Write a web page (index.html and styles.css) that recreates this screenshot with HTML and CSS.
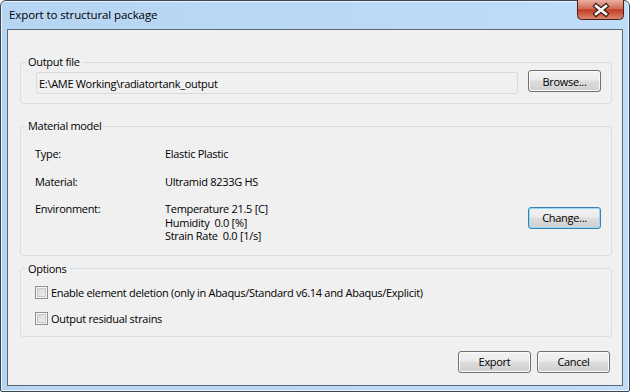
FILE: index.html
```html
<!DOCTYPE html>
<html lang="en">

<head>
  <meta charset="UTF-8">
  <title>Export to structural package</title>
  <link rel="stylesheet" href="styles.css">
</head>

<body>
  <div class="window">
    <div class="titlebar">
      <span class="title">Export to structural package</span>
      <div class="close-btn">
        <svg width="47" height="20" viewBox="0 0 47 20">
          <defs>
            <linearGradient id="close-grad" x1="0" y1="0" x2="0" y2="1">
              <stop offset="0" stop-color="#e9b0a4" />
              <stop offset="0.45" stop-color="#d46a55" />
              <stop offset="0.5" stop-color="#c23b22" />
              <stop offset="1" stop-color="#d98a73" />
            </linearGradient>
          </defs>
          <path d="M0.5 0 V15.5 Q0.5 19.5 4.5 19.5 H42.5 Q46.5 19.5 46.5 15.5 V0" fill="url(#close-grad)" stroke="#4a2018" />
          <path d="M19 6 L29 14 M29 6 L19 14" stroke="#3a1c16" stroke-width="5" stroke-linecap="square" />
          <path d="M19 6 L29 14 M29 6 L19 14" stroke="#ffffff" stroke-width="2.6" stroke-linecap="square" />
        </svg>
      </div>
    </div>

    <div class="client">
      <fieldset class="group group-output">
        <legend>Output file</legend>
        <div class="file-row">
          <input class="path-field" type="text" value="E:\AME Working\radiatortank_output" readonly>
          <button class="btn">Browse...</button>
        </div>
      </fieldset>

      <fieldset class="group group-material">
        <legend>Material model</legend>
        <div class="props">
          <div class="prop-label">Type:</div>
          <div class="prop-value wide">Elastic Plastic</div>
          <div class="prop-label">Material:</div>
          <div class="prop-value wide">Ultramid 8233G HS</div>
          <div class="prop-label">Environment:</div>
          <div class="prop-value env">
            Temperature 21.5 [C]<br>
            Humidity&nbsp; 0.0 [%]<br>
            Strain Rate&nbsp; 0.0 [1/s]
          </div>
          <button class="btn btn-default change-btn">Change...</button>
        </div>
      </fieldset>

      <fieldset class="group group-options">
        <legend>Options</legend>
        <div class="options">
          <label class="check-row"><span class="checkbox"></span>Enable element deletion (only in Abaqus/Standard v6.14 and Abaqus/Explicit)</label>
          <label class="check-row"><span class="checkbox"></span>Output residual strains</label>
        </div>
      </fieldset>

      <div class="footer">
        <button class="btn">Export</button>
        <button class="btn">Cancel</button>
      </div>
    </div>
  </div>
</body>

</html>
```

FILE: styles.css
```css
body {
  margin: 0;
  font-family: "Open Sans", "Noto Sans", sans-serif;
  font-size: 11px;
  letter-spacing: -0.3px;
  color: #000;
}

/* window frame */
.window {
  width: 630px;
  height: 392px;
  box-sizing: border-box;
  border: 1px solid #3b4652;
  border-radius: 6px 6px 2px 2px;
  background: linear-gradient(to right, #b6d5f3, #bfdcf8);
  box-shadow: inset 0 0 0 1px rgba(255, 255, 255, 0.7);
  display: flex;
  flex-direction: column;
}

.titlebar {
  height: 28px;
  display: flex;
  justify-content: space-between;
  align-items: flex-start;
  padding-left: 8px;
}

.title {
  font-size: 11.5px;
  letter-spacing: -0.1px;
  line-height: 27px;
}

.close-btn {
  width: 47px;
  height: 20px;
  margin-top: -1px;
  margin-right: 5px;
}

.close-btn svg {
  display: block;
}

.client {
  flex: 1;
  margin: 0 6px 5px 6px;
  border: 1px solid #5b6977;
  background: #f0f0f0;
  padding: 25px 10px 0 12px;
  display: flex;
  flex-direction: column;
}

/* group boxes */
.group {
  margin: 0;
  padding: 0;
  border: 1px solid #d5dfe5;
  border-radius: 3px;
}

.group legend {
  margin-left: 5px;
  padding: 0 2px;
  line-height: 14px;
}

.group-material {
  margin-top: 15px;
}

.group-options {
  margin-top: 6px;
}

.file-row {
  display: flex;
  align-items: flex-start;
  gap: 10px;
  padding: 1px 10px 9px 15px;
}

.path-field {
  flex: 1;
  height: 22px;
  box-sizing: border-box;
  margin: 2px 0 0 0;
  padding: 0 2px;
  border: 1px solid #dadada;
  border-radius: 2px;
  background: #f0f0f0;
  font: inherit;
  letter-spacing: inherit;
  color: #000;
  outline: none;
}

.props {
  display: grid;
  grid-template-columns: 130px 1fr 73px;
  row-gap: 13.5px;
  padding: 14px 10px 12px 14px;
  line-height: 14px;
}

.prop-value.wide {
  grid-column: span 2;
}

.prop-value.env {
  line-height: 13.5px;
}

.change-btn {
  align-self: start;
  margin-top: 5px;
}

.options {
  display: flex;
  flex-direction: column;
  gap: 12px;
  padding: 10px 0 10px 14px;
}

.check-row {
  display: flex;
  align-items: center;
  gap: 3px;
  line-height: 14px;
}

.checkbox {
  width: 13px;
  height: 13px;
  box-sizing: border-box;
  border: 1px solid #8f8f8f;
  background: linear-gradient(135deg, #d3d3d3, #f4f4f4);
  box-shadow: inset 0 0 0 1px #f6f6f6, inset 0 0 0 2px #c9c9c9;
}

/* buttons */
.btn {
  width: 73px;
  height: 22px;
  box-sizing: border-box;
  padding: 0;
  border: 1px solid #707070;
  border-radius: 3px;
  background: linear-gradient(#f2f2f2 0%, #ebebeb 45%, #dddddd 50%, #cfcfcf 100%);
  box-shadow: inset 0 0 0 1px #fbfbfb;
  font: inherit;
  letter-spacing: inherit;
  color: #000;
}

.btn-default {
  border-color: #3c7fb1;
  box-shadow: inset 0 0 0 1px #8fdcf7;
}

.footer {
  display: flex;
  justify-content: flex-end;
  gap: 6px;
  margin-top: 14px;
  margin-right: 2px;
}
```
